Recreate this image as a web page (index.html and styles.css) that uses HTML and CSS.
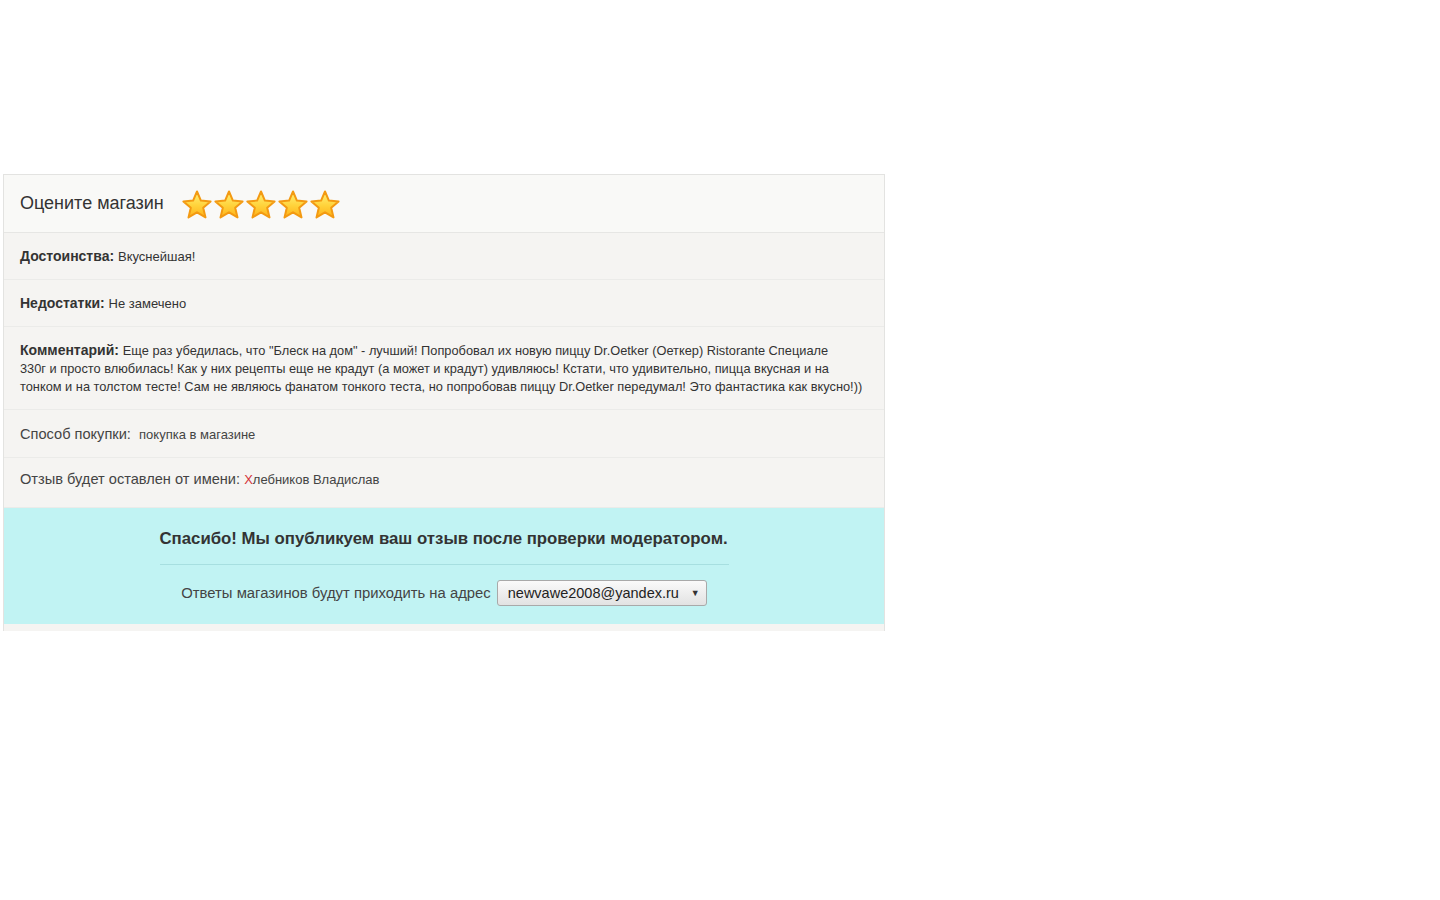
FILE: index.html
```html
<!doctype html>
<html lang="ru">
<head>
  <meta charset="utf-8">
  <title>Отзыв о магазине</title>
  <link rel="stylesheet" href="styles.css">
</head>
<body>

<div class="review">
  <div class="review-head">
    <span class="review-title">Оцените магазин</span>
    <span class="stars">
      <svg class="star" viewBox="0 0 32 32"><use href="#star"/></svg>
      <svg class="star" viewBox="0 0 32 32"><use href="#star"/></svg>
      <svg class="star" viewBox="0 0 32 32"><use href="#star"/></svg>
      <svg class="star" viewBox="0 0 32 32"><use href="#star"/></svg>
      <svg class="star" viewBox="0 0 32 32"><use href="#star"/></svg>
    </span>
  </div>

  <div class="review-row"><b>Достоинства:</b> <span class="val">Вкуснейшая!</span></div>
  <div class="review-row"><b>Недостатки:</b> <span class="val">Не замечено</span></div>
  <div class="review-row comment"><b>Комментарий:</b> <span class="val">Еще раз убедилась, что "Блеск на дом" - лучший! Попробовал их новую пиццу Dr.Oetker (Оеткер) Ristorante Специале<br>330г и просто влюбилась! Как у них рецепты еще не крадут (а может и крадут) удивляюсь! Кстати, что удивительно, пицца вкусная и на<br>тонком и на толстом тесте! Сам не являюсь фанатом тонкого теста, но попробовав пиццу Dr.Oetker передумал! Это фантастика как вкусно!))</span></div>
  <div class="review-row plain">Способ покупки: &nbsp;<span class="val">покупка в магазине</span></div>
  <div class="review-row plain author">Отзыв будет оставлен от имени: <span class="val"><span class="first">Х</span>лебников Владислав</span></div>

  <div class="thanks">
    <div class="thanks-title">Спасибо! Мы опубликуем ваш отзыв после проверки модератором.</div>
    <div class="thanks-mail">
      Ответы магазинов будут приходить на адрес
      <span class="mail-select">newvawe2008@yandex.ru <span class="arrow">▼</span></span>
    </div>
  </div>
  <div class="review-foot"></div>
</div>

<svg width="0" height="0" class="defs">
  <defs>
    <linearGradient id="starFill" x1="0" y1="0" x2="0" y2="1">
      <stop offset="0" stop-color="#fff27a"/>
      <stop offset="0.55" stop-color="#ffd23a"/>
      <stop offset="1" stop-color="#ffb21a"/>
    </linearGradient>
    <path id="star" d="M16 2.5 L19.9 11.6 L29.6 12.4 L22.2 18.8 L24.5 28.4 L16 23.3 L7.5 28.4 L9.8 18.8 L2.4 12.4 L12.1 11.6 Z" fill="url(#starFill)" stroke="#f39a12" stroke-width="2" stroke-linejoin="round"/>
  </defs>
</svg>

</body>
</html>
```

FILE: styles.css
```css
body {
  margin: 0;
  padding: 174px 0 0 3px;
  font-family: "Liberation Sans", Arial, sans-serif;
  color: #333;
  background: #fff;
}

.review {
  width: 880px;
  border: 1px solid #e3e3e1;
  border-bottom: none;
  background: #f5f4f2;
}

.review-head {
  height: 57px;
  display: flex;
  align-items: center;
  padding: 0 16px;
  background: #f9f9f7;
  border-bottom: 1px solid #e6e6e4;
}

.review-title {
  font-size: 18px;
  color: #333;
  margin-right: 17px;
}

.stars {
  display: flex;
  margin-top: 2px;
}

.star {
  width: 32px;
  height: 32px;
  display: block;
}

.review-row {
  padding: 15px 16px 14px;
  font-size: 14px;
  line-height: 17px;
  border-bottom: 1px solid #ebebe9;
}

.review-row b {
  color: #333;
}

.review-row .val {
  font-size: 13px;
  line-height: 1;
}

.comment {
  padding: 14px 4px 14px 16px;
  line-height: 18px;
  white-space: nowrap;
}

.comment .val {
  font-size: 12.8px;
}

.plain {
  color: #444;
  font-size: 14.6px;
  padding: 16px 16px 14px;
}

.author {
  padding: 13px 16px 19px;
}

.author .val {
  color: #444;
}

.first {
  color: #d4333a;
}

.thanks {
  background: #c1f3f3;
  padding: 21px 0 18px;
  display: flex;
  flex-direction: column;
  align-items: center;
}

.thanks-title {
  font-size: 16.8px;
  font-weight: bold;
  color: #333;
  padding-bottom: 15px;
  border-bottom: 1px solid #a7dfe0;
  width: 569px;
  white-space: nowrap;
}

.thanks-mail {
  margin-top: 15px;
  font-size: 14.85px;
  color: #444;
  display: flex;
  align-items: center;
  gap: 6px;
}

.mail-select {
  display: inline-flex;
  align-items: center;
  justify-content: space-between;
  box-sizing: border-box;
  width: 210px;
  height: 26px;
  padding: 0 6px 0 10px;
  border: 1px solid #a9a9a9;
  border-radius: 3px;
  background: linear-gradient(#fafafa, #e2e2e2);
  font-size: 14.5px;
  color: #222;
}

.arrow {
  font-size: 9px;
  color: #333;
}

.review-foot {
  height: 7px;
  background: #f5f4f2;
}

.defs {
  position: absolute;
}
```
